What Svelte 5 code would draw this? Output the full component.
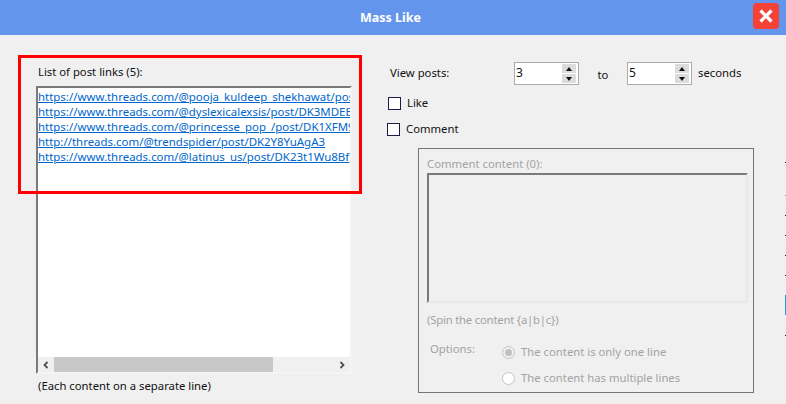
<script>
  const links = [
    'https://www.threads.com/@pooja_kuldeep_shekhawat/post',
    'https://www.threads.com/@dyslexicalexsis/post/DK3MDEB',
    'https://www.threads.com/@princesse_pop_/post/DK1XFM9',
    'http://threads.com/@trendspider/post/DK2Y8YuAgA3',
    'https://www.threads.com/@latinus_us/post/DK23t1Wu8Bf',
  ];

  // bits of the window behind, showing along the right edge
  const ticks = [
    { y: 162, h: 1, color: '#222' },
    { y: 195, h: 1, color: '#999' },
    { y: 215, h: 1, color: '#222' },
    { y: 235, h: 1, color: '#222' },
    { y: 255, h: 1, color: '#222' },
    { y: 275, h: 1, color: '#222' },
    { y: 295, h: 20, color: '#1e9be0' },
    { y: 335, h: 1, color: '#222' },
  ];
</script>

<div class="window">
  <header class="titlebar">
    <span class="title">Mass Like</span>
    <button class="close" aria-label="Close">
      <svg viewBox="0 0 16 16" width="16" height="16">
        <path d="M2.5 2.5 L13.5 13.5 M13.5 2.5 L2.5 13.5" stroke="#fff" stroke-width="3.2" fill="none" />
      </svg>
    </button>
  </header>

  <div class="content">
    <section class="left">
      <div class="list-label">List of post links (5):</div>
      <div class="listbox">
        <div class="links">
          {#each links as link}
            <a href={link}>{link}</a>
          {/each}
        </div>
        <div class="hscroll">
          <svg class="arrow" viewBox="0 0 8 8" width="8" height="8"><path d="M5.5 1 L2.5 4 L5.5 7" stroke="#505050" stroke-width="1.8" fill="none" /></svg>
          <div class="track"><div class="thumb"></div></div>
          <svg class="arrow" viewBox="0 0 8 8" width="8" height="8"><path d="M2.5 1 L5.5 4 L2.5 7" stroke="#505050" stroke-width="1.8" fill="none" /></svg>
        </div>
      </div>
      <div class="hint">(Each content on a separate line)</div>
    </section>

    <section class="right">
      <div class="view-row">
        <span class="view-label">View posts:</span>
        <div class="spin">
          <span class="spin-value">3</span>
          <div class="spin-btns">
            <span class="up"></span>
            <span class="down"></span>
          </div>
        </div>
        <span class="to">to</span>
        <div class="spin">
          <span class="spin-value">5</span>
          <div class="spin-btns">
            <span class="up"></span>
            <span class="down"></span>
          </div>
        </div>
        <span class="seconds">seconds</span>
      </div>

      <label class="check like"><span class="box"></span><span class="check-text">Like</span></label>
      <label class="check comment"><span class="box"></span><span class="check-text">Comment</span></label>

      <div class="group">
        <div class="muted">Comment content (0):</div>
        <div class="comment-box"></div>
        <div class="muted spintext">(Spin the content &#123;a|b|c&#125;)</div>
        <div class="options">
          <span class="muted options-label">Options:</span>
          <div class="radios">
            <div class="radio-row"><span class="radio on"></span><span class="muted">The content is only one line</span></div>
            <div class="radio-row"><span class="radio"></span><span class="muted">The content has multiple lines</span></div>
          </div>
        </div>
      </div>
    </section>
  </div>

  <div class="highlight"></div>

  {#each ticks as t}
    <span class="tick" style="top: {t.y}px; height: {t.h}px; background: {t.color}"></span>
  {/each}
</div>

<style>
  :global(body) {
    margin: 0;
    background: #f0f0f0;
  }

  .window {
    position: relative;
    width: 786px;
    height: 404px;
    overflow: hidden;
    background: #f0f0f0;
    font-family: "Noto Sans", "Open Sans", sans-serif;
    font-size: 11.3px;
    color: #111;
  }

  .titlebar {
    height: 35px;
    background: #6495ed;
    display: flex;
    align-items: center;
    justify-content: center;
    padding-right: 5px;
    position: relative;
  }

  .title {
    color: #fff;
    font-weight: bold;
    font-size: 12.5px;
  }

  .close {
    position: absolute;
    top: 3px;
    right: 7px;
    width: 26px;
    height: 26px;
    padding: 0;
    border: none;
    border-radius: 4px;
    background: #f44336;
    display: flex;
    align-items: center;
    justify-content: center;
  }

  .content {
    display: flex;
    height: 369px;
  }

  .left {
    width: 316px;
    margin-left: 36px;
    padding-top: 29px;
  }

  .list-label {
    height: 22px;
    padding-left: 2px;
    line-height: 16px;
  }

  .listbox {
    height: 288px;
    box-sizing: border-box;
    background: #fff;
    border: 2px solid;
    border-color: #7a7a7a #f4f4f4 #f4f4f4 #7a7a7a;
    display: flex;
    flex-direction: column;
  }

  .links {
    flex: 1;
    overflow: hidden;
    padding-top: 1px;
  }

  .links a {
    display: block;
    white-space: nowrap;
    color: #0066cc;
    line-height: 15px;
    font-size: 11.45px;
  }

  .hscroll {
    height: 15px;
    background: #f0f0f0;
    display: flex;
    align-items: center;
  }

  .arrow {
    width: 16px;
    flex: none;
  }

  .track {
    flex: 1;
    height: 15px;
  }

  .thumb {
    width: 219px;
    height: 15px;
    background: #c8c8c8;
  }

  .hint {
    padding: 4px 0 0 2px;
    line-height: 16px;
  }

  .right {
    margin-left: 35px;
    width: 370px;
    padding-top: 27px;
    position: relative;
  }

  .view-row {
    display: flex;
    align-items: center;
    height: 23px;
    padding-left: 3px;
  }

  .view-label {
    width: 124px;
    padding-bottom: 2px;
  }

  .spin {
    width: 65px;
    height: 23px;
    box-sizing: border-box;
    background: #fff;
    border: 1px solid #acacac;
    display: flex;
    justify-content: space-between;
    align-items: center;
    padding: 0 1px;
  }

  .spin-value {
    font-size: 12px;
    padding-bottom: 3px;
  }

  .spin-btns {
    width: 14px;
    height: 19px;
    display: flex;
    flex-direction: column;
    gap: 1px;
    margin-right: 1px;
  }

  .spin-btns span {
    flex: 1;
    background: #dcdcdc;
    display: flex;
    align-items: center;
    justify-content: center;
  }

  .up::after {
    content: "";
    border: 3px solid transparent;
    border-top: 0;
    border-bottom: 4px solid #111;
  }

  .down::after {
    content: "";
    border: 3px solid transparent;
    border-bottom: 0;
    border-top: 4px solid #111;
  }

  .to {
    width: 48px;
    text-align: center;
    padding-top: 1px;
  }

  .seconds {
    margin-left: 6px;
    padding-bottom: 2px;
  }

  .check {
    display: flex;
    align-items: center;
    gap: 6px;
  }

  .check-text {
    margin-bottom: 2px;
  }

  .like {
    margin: 11px 0 0 1px;
    height: 14px;
  }

  .comment {
    margin: 12px 0 0 0;
    height: 14px;
  }

  .box {
    width: 11px;
    height: 11px;
    background: #fff;
    border: 1px solid #241a4a;
  }

  .group {
    margin: 12px 0 0 31px;
    width: 336px;
    height: 245px;
    box-sizing: border-box;
    border: 1px solid #767676;
    padding: 7px 5px 0 8px;
  }

  .muted {
    color: #a3a3a3;
    line-height: 16px;
  }

  .comment-box {
    margin-top: 1px;
    height: 130px;
    box-sizing: border-box;
    border: 2px solid;
    border-color: #7a7a7a #e8e8e8 #e8e8e8 #7a7a7a;
  }

  .spintext {
    margin-top: 9px;
    letter-spacing: -0.2px;
  }

  .options {
    display: flex;
    margin-top: 16px;
  }

  .options-label {
    width: 72px;
    padding-left: 3px;
    margin-top: -3px;
  }

  .radios {
    display: flex;
    flex-direction: column;
    gap: 10px;
  }

  .radio-row {
    display: flex;
    align-items: center;
    gap: 6px;
  }

  .radio {
    width: 11px;
    height: 11px;
    border: 1px solid #c4c4c4;
    border-radius: 50%;
    background: #fff;
    position: relative;
  }

  .radio.on {
    background: #f0f0f0;
  }

  .radio.on::after {
    content: "";
    position: absolute;
    top: 2px;
    left: 2px;
    width: 7px;
    height: 7px;
    border-radius: 50%;
    background: #c0c0c0;
  }

  .highlight {
    position: absolute;
    left: 18px;
    top: 55px;
    width: 338px;
    height: 133px;
    border: 3px solid #fe0000;
    pointer-events: none;
  }

  .tick {
    position: absolute;
    right: 0;
    width: 1px;
  }
</style>
